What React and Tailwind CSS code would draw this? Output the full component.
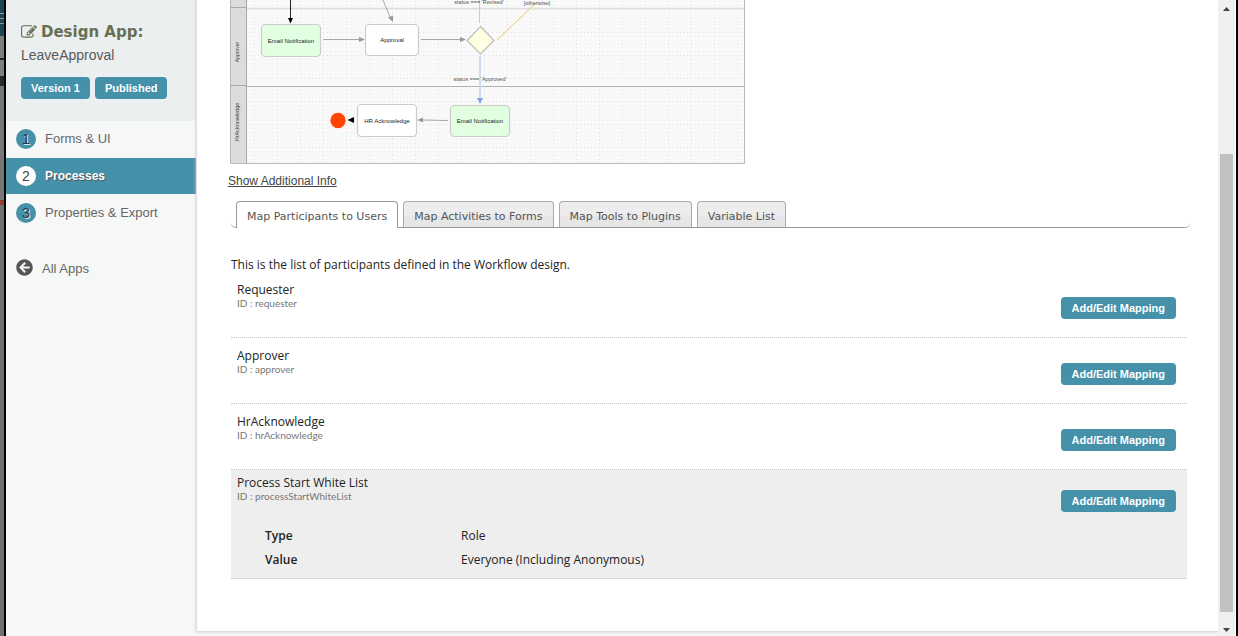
import React from "react";
import { FaArrowCircleLeft } from "react-icons/fa";

const steps = [
  { n: 1, label: "Forms & UI" },
  { n: 2, label: "Processes", active: true },
  { n: 3, label: "Properties & Export" },
];

const tabs = ["Map Participants to Users", "Map Activities to Forms", "Map Tools to Plugins", "Variable List"];

const participants = [
  { name: "Requester", id: "requester" },
  { name: "Approver", id: "approver" },
  { name: "HrAcknowledge", id: "hrAcknowledge" },
];

function EditIcon() {
  return (
    <svg viewBox="0 0 1792 1792" className="size-4 shrink-0" fill="currentColor" aria-hidden="true">
      <path d="M888 1184l116-116-152-152-116 116v56h96v96h56zm440-720q-16-16-33 1l-350 350q-17 17-1 33t33-1l350-350q17-17 1-33zm80 594v190q0 119-84.500 203.500t-203.500 84.500h-832q-119 0-203.500-84.500t-84.500-203.500v-832q0-119 84.500-203.500t203.500-84.500h832q63 0 117 25 15 7 18 23 3 17-9 29l-49 49q-14 14-32 8-23-6-45-6h-832q-66 0-113 47t-47 113v832q0 66 47 113t113 47h832q66 0 113-47t47-113v-126q0-13 9-22l64-64q15-15 35-7t20 29zm-96-738l288 288-672 672h-288v-288zm444 132l-92 92-288-288 92-92q28-28 68-28t68 28l152 152q28 28 28 68t-28 68z" />
    </svg>
  );
}

function PageEdge() {
  return (
    <div className="flex w-1.5 shrink-0 border-r-2 border-black bg-[#6f7171]" aria-hidden="true">
      <div className="flex w-full flex-col">
        <div className="flex h-9 flex-col justify-center gap-1 bg-[#1c4653]">
          <span className="h-px bg-[#8a9a9f]" />
          <span className="h-px bg-[#8a9a9f]" />
          <span className="h-px bg-[#8a9a9f]" />
        </div>
        <div className="h-[22px] bg-[#7f7f7f]" />
        <div className="h-0.5 bg-[#222]" />
        <div className="h-4 bg-[#7f7f7f]" />
        <div className="h-2.5 bg-[#2a2a2a]" />
        <div className="h-[114px] bg-[#777]" />
        <div className="h-[5px] bg-[#98392f]" />
      </div>
    </div>
  );
}

function Sidebar() {
  return (
    <aside className="w-[190px] shrink-0 bg-[#f6f8f8] font-['Liberation_Sans',sans-serif]">
      <header className="h-[121px] bg-[#ebeff0] px-[15px] pt-[22px]">
        <h1 className="flex h-5 items-center gap-1 font-['DejaVu_Sans',sans-serif] text-[15px] font-bold leading-5 text-[#676f55]">
          <EditIcon />
          Design App:
        </h1>
        <p className="mt-1 text-sm leading-[18px] text-[#5a5a5a]">LeaveApproval</p>
        <div className="mt-[13px] flex gap-[5px] text-[11px] font-bold leading-[22px] text-white">
          <span className="rounded bg-[#4591a9] px-2.5">Version 1</span>
          <span className="rounded bg-[#4591a9] px-2.5">Published</span>
        </div>
      </header>
      <nav className="text-[13px]">
        {steps.map((s) => (
          <a
            key={s.n}
            href="#"
            className={
              s.active
                ? "mb-px flex h-9 items-center gap-[9px] bg-[#4591a9] pl-2.5 font-bold text-white [text-shadow:1px_1px_1px_#555]"
                : "mb-px flex h-9 items-center gap-[9px] pl-2.5 text-[#666]"
            }
          >
            <span
              className={
                s.active
                  ? "size-5 rounded-full bg-white text-center text-sm font-normal leading-5 text-[#444] [text-shadow:none]"
                  : "size-5 rounded-full bg-[#4591a9] text-center text-sm leading-5 text-[#333] [text-shadow:1px_1px_0_#dde8ec]"
              }
            >
              {s.n}
            </span>
            <span className={s.active ? "text-xs" : ""}>{s.label}</span>
          </a>
        ))}
        <a href="#" className="mt-5 flex h-9 items-center gap-[9px] pl-2.5 text-[#666]">
          <FaArrowCircleLeft className="mb-1 size-[17px] text-[#555]" />
          All Apps
        </a>
      </nav>
    </aside>
  );
}

function Diagram() {
  const dots = [0, 4, 8, 12, 15, 19];
  return (
    <svg width="515" height="164" viewBox="0 0 515 164" className="block max-w-full" role="img" aria-label="Workflow design" fontFamily="'Liberation Sans', sans-serif">
      <defs>
        <pattern id="grid" x="1" y="9" width="23" height="23" patternUnits="userSpaceOnUse">
          {dots.map((y) => dots.map((x) => (
            <rect key={x + "-" + y} x={x} y={y} width="1" height="1" fill={x === 0 || y === 0 ? "#dedede" : "#f0f0f0"} />
          )))}
        </pattern>
      </defs>
      <rect width="515" height="164" fill="#f9f9f9" />
      <rect x="17" width="497" height="163" fill="url(#grid)" />
      <rect width="17" height="163" fill="#dcdcdc" />
      <path d="M0.500 0V163.500H514.500V0" fill="none" stroke="#b8b8b8" />
      <path d="M16.500 0V163" stroke="#a8a8a8" />
      <path d="M0 7.500H16M0 85.500H16" stroke="#aaa" />
      <path d="M17 8.500H514" stroke="#dedede" strokeWidth="1.500" />
      <path d="M17 86.500H514" stroke="#b2b2b2" />
      <g fontSize="5" fill="#444" textAnchor="middle">
        <text transform="translate(9 52) rotate(-90)">Approver</text>
        <text transform="translate(9 122) rotate(-90)" fontSize="5.500">HrAcknowledge</text>
      </g>
      <g fill="none" stroke="#a8a8a8">
        <path d="M93 39.500H129M191 39.500H230M218 120.500L193 120" />
        <path d="M153 0L160 17" />
        <path d="M60.500 0V18" stroke="#222" />
        <path d="M249.500 0V23" stroke="#bccbea" />
        <path d="M250 56V98" stroke="#cfdcf3" strokeWidth="2" />
        <path d="M267 40L307 2" stroke="#efc468" />
      </g>
      <g fill="#999">
        <path d="M129 37L135 39.500L129 42ZM230 37L236 39.500L230 42ZM193 117.500L187 120L193 122.500Z" />
        <path d="M158 17.500L163 22L163 15.500Z" />
        <path d="M58 18H63L60.500 23.500Z" fill="#000" />
        <path d="M247 98H253L250 104Z" fill="#7ea5df" />
        <path d="M124 117L117.500 120L124 123Z" fill="#000" />
      </g>
      <g stroke="#ccc" strokeWidth="1.200">
        <rect x="31.500" y="24.500" width="59" height="32" rx="4" fill="#e2ffe2" />
        <rect x="135.500" y="24.500" width="53" height="31" rx="4" fill="#fff" />
        <rect x="127.500" y="104.500" width="59" height="32" rx="4" fill="#fff" />
        <rect x="220.500" y="105.500" width="59" height="31" rx="4" fill="#e2ffe2" />
        <path d="M250.500 26.500L264 40.500L250.500 54L237 40.500Z" fill="#ffffe2" stroke="#bdbdbd" />
      </g>
      <circle cx="108" cy="120.500" r="9" fill="#fff" stroke="#ffe4dc" strokeWidth="0.700" />
      <circle cx="108" cy="120.500" r="7.700" fill="#ff4500" />
      <g fontSize="6" fill="#222" textAnchor="middle">
        <text x="61" y="42.500">Email Notification</text>
        <text x="162" y="42">Approval</text>
        <text x="157" y="122.500">HR Acknowledge</text>
        <text x="250" y="122.500">Email Notification</text>
      </g>
      <g fontSize="5.500" fill="#555" textAnchor="middle">
        <text x="249" y="4">status === 'Revised'</text>
        <text x="250" y="81">status === 'Approved'</text>
        <text x="307" y="5">[otherwise]</text>
      </g>
    </svg>
  );
}

function MappingButton() {
  return (
    <button type="button" className="mt-3.5 h-[22px] shrink-0 rounded bg-[#4591a9] px-[11px] font-['Liberation_Sans',sans-serif] text-[11px] font-bold text-white">
      Add/Edit Mapping
    </button>
  );
}

function Heading({ name, id }) {
  return (
    <div>
      <h2 className="text-xs leading-[14px] text-[#222]">{name}</h2>
      <p className="font-['Lato',sans-serif] text-[10px] leading-3 text-[#777]">ID : {id}</p>
    </div>
  );
}

export default function App() {
  return (
    <div className="flex min-h-screen bg-[#f6f8f8]">
      <PageEdge />
      <Sidebar />
      <main className="mb-1 min-w-0 flex-1 border-b border-l border-[#dcdfdf] bg-white pb-[52px] pl-[33px] pr-7 shadow-[0_0_3px_#ccc]">
        <Diagram />
        <a href="#" className="-ml-0.5 mt-2 inline-block font-['Liberation_Sans',sans-serif] text-xs leading-[18px] text-[#444] underline">
          Show Additional Info
        </a>
        <div role="tablist" className="ml-px mt-2.5 flex gap-[5px] rounded-b-[5px] border-b border-[#999] pl-[5px] font-['DejaVu_Sans',sans-serif] text-[11px] text-[#555]">
          {tabs.map((t, i) => (
            <button
              key={t}
              type="button"
              role="tab"
              aria-selected={i === 0}
              className={
                i === 0
                  ? "-mb-px h-[27px] rounded-t border border-b-0 border-[#999] bg-white px-2.5 pt-1"
                  : "h-[26px] rounded-t border border-b-0 border-[#aaa] bg-linear-to-b from-[#ededed] from-50% to-[#e6e6e6] to-60% px-2.5 pt-1.5"
              }
            >
              {t}
            </button>
          ))}
        </div>
        <section className="ml-px mr-[3px] font-['Open_Sans',sans-serif]">
          <p className="pt-[30px] text-xs leading-[14px] text-[#222]">This is the list of participants defined in the Workflow design.</p>
          {participants.map((p) => (
            <article key={p.id} className="flex h-[66px] items-start justify-between border-b border-dotted border-[#c4c4c4] pl-1.5 pr-[11px] pt-[11px]">
              <Heading name={p.name} id={p.id} />
              <MappingButton />
            </article>
          ))}
          <article className="border-b border-dotted border-[#c4c4c4] bg-[#eee] pb-1.5 pl-1.5 pr-[11px] pt-1.5">
            <div className="flex items-start justify-between">
              <Heading name="Process Start White List" id="processStartWhiteList" />
              <MappingButton />
            </div>
            <dl className="ml-7 mt-3 grid grid-cols-[196px_1fr] text-xs leading-6 text-[#222]">
              <dt className="font-semibold">Type</dt>
              <dd>Role</dd>
              <dt className="font-semibold">Value</dt>
              <dd>Everyone (Including Anonymous)</dd>
            </dl>
          </article>
        </section>
      </main>
      <div className="flex w-[17px] shrink-0 flex-col items-center bg-[#f0f0f0] pb-1 pt-[7px]" aria-hidden="true">
        <svg width="7" height="4" viewBox="0 0 7 4"><path d="M3.500 0L7 4H0Z" fill="#444" /></svg>
        <div className="mt-[143px] w-[13px] flex-1 bg-[#c1c1c1]" />
        <svg className="mt-4" width="7" height="4" viewBox="0 0 7 4"><path d="M0 0H7L3.500 4Z" fill="#444" /></svg>
      </div>
      <div className="w-[3px] shrink-0 border-l border-white bg-black" />
    </div>
  );
}
